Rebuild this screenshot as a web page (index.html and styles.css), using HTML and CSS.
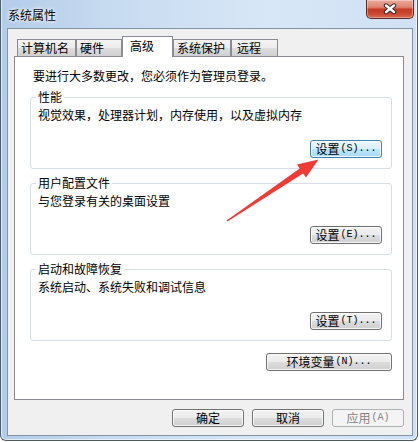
FILE: index.html
```html
<!DOCTYPE html>
<html lang="zh-CN">
<head>
<meta charset="utf-8">
<title>系统属性</title>
<link rel="stylesheet" href="styles.css">
</head>
<body>
<div class="window">
  <div class="titlebar">
    <span class="title">系统属性</span>
    <div class="close">
      <svg width="16" height="12" viewBox="0 0 16 12">
        <path d="M4 2.5 L12 9 M12 2.5 L4 9" stroke="#3a2a28" stroke-width="4.4" stroke-linecap="round" fill="none"/>
        <path d="M4 2.5 L12 9 M12 2.5 L4 9" stroke="#ffffff" stroke-width="2.4" stroke-linecap="round" fill="none"/>
      </svg>
    </div>
  </div>
  <div class="client">
    <div class="tabs">
      <div class="tab tab-name">计算机名</div>
      <div class="tab tab-hw">硬件</div>
      <div class="tab tab-adv tab-selected">高级</div>
      <div class="tab tab-prot">系统保护</div>
      <div class="tab tab-remote">远程</div>
    </div>
    <div class="panel">
      <p class="intro">要进行大多数更改，您必须作为管理员登录。</p>
      <fieldset class="group">
        <legend>性能</legend>
        <div class="desc">视觉效果，处理器计划，内存使用，以及虚拟内存</div>
        <div class="group-actions"><button class="btn btn-hot">设置<span class="acc">(S)...</span></button></div>
      </fieldset>
      <fieldset class="group">
        <legend>用户配置文件</legend>
        <div class="desc">与您登录有关的桌面设置</div>
        <div class="group-actions"><button class="btn">设置<span class="acc">(E)...</span></button></div>
      </fieldset>
      <fieldset class="group">
        <legend>启动和故障恢复</legend>
        <div class="desc">系统启动、系统失败和调试信息</div>
        <div class="group-actions"><button class="btn">设置<span class="acc">(T)...</span></button></div>
      </fieldset>
      <div class="env-row"><button class="btn btn-wide">环境变量<span class="acc">(N)...</span></button></div>
    </div>
    <div class="footer">
      <button class="btn">确定</button>
      <button class="btn">取消</button>
      <button class="btn btn-disabled">应用<span class="acc">(A)</span></button>
    </div>
  </div>
</div>
<svg class="arrow" width="420" height="442" viewBox="0 0 420 442">
  <polygon points="226.5,220.5 299.7,168.6 297,164.6 318.5,159.5 306,177.4 303.1,173.6 227.5,221.5" fill="#ef3b36"/>
</svg>
</body>
</html>
```
FILE: styles.css
```css
* { box-sizing: border-box; }
html, body { margin: 0; padding: 0; }
body {
  width: 420px;
  height: 442px;
  background: #ffffff;
  font-family: "Noto Sans CJK SC", "Liberation Sans", sans-serif;
  font-size: 12px;
  color: #000;
  position: relative;
  overflow: hidden;
}
.window {
  width: 418px;
  height: 441px;
  border: 1px solid #4d5b6a;
  border-top: none;
  border-radius: 0 0 6px 6px;
  background: linear-gradient(to right, #b3cce8 0%, #c6daf0 25%, #d8e7f7 65%, #cfe1f4 100%);
  padding: 0 4px 4px 6px;
  display: flex;
  flex-direction: column;
  box-shadow: inset 1px 0 0 rgba(255,255,255,0.6), inset -1px 0 0 rgba(255,255,255,0.6), inset 0 -1px 0 rgba(255,255,255,0.6);
}
.titlebar {
  height: 28px;
  flex-shrink: 0;
  display: flex;
  justify-content: space-between;
  align-items: flex-start;
  margin-right: -1px;
}
.title {
  padding: 7px 0 0 1px;
  line-height: 16px;
  text-shadow: 0 0 5px #ffffff, 0 0 3px #ffffff;
}
.close {
  width: 48px;
  height: 19px;
  border: 1px solid #5b2a22;
  border-top: none;
  border-radius: 0 0 5px 5px;
  background: linear-gradient(#e9aa9b 0%, #de8470 40%, #c43c26 52%, #c8442c 72%, #d96a51 100%);
  box-shadow: inset 0 0 0 1px rgba(255,255,255,0.35);
  display: flex;
  align-items: center;
  justify-content: center;
}
.client {
  height: 408px;
  flex-shrink: 0;
  border: 1px solid #8393a6;
  background: #f0f0f0;
  padding: 7px 8px 0 6px;
  display: flex;
  flex-direction: column;
}
.tabs {
  display: flex;
  align-items: flex-end;
  height: 20px;
  padding-left: 3px;
  position: relative;
  z-index: 1;
}
.tab {
  height: 17px;
  border: 1px solid #898c95;
  border-bottom: none;
  padding: 0 0 0 3px;
  line-height: 16px;
  white-space: nowrap;
  background: linear-gradient(#f4f4f4 0%, #ececec 50%, #dedede 50%, #d0d0d0 100%);
}
.tab-selected {
  height: 21px;
  margin-bottom: -1px;
  padding: 1px 0 0 7px;
  background: #ffffff;
}
.tab-name { width: 59px; }
.tab-hw { width: 46px; }
.tab-adv { width: 51px; }
.tab-prot { width: 58px; }
.tab-remote { width: 47px; padding-left: 5px; }
.panel {
  height: 344px;
  flex-shrink: 0;
  border: 1px solid #898c95;
  background: #ffffff;
  padding: 11px 11px 0 15px;
  display: flex;
  flex-direction: column;
}
.intro {
  margin: 0 0 6px 3px;
  line-height: 16px;
}
.group {
  margin: 0 0 7px 0;
  border: 1px solid #d5dfe5;
  border-radius: 3px;
  padding: 0 9px 10px 7px;
  min-width: 0;
}
.group legend {
  line-height: 14px;
  padding: 0 2px;
  margin-left: -2px;
}
.desc {
  margin-top: 3px;
  line-height: 16px;
}
.group-actions {
  margin-top: 17px;
  display: flex;
  justify-content: flex-end;
}
.env-row {
  margin-top: 5px;
  display: flex;
  justify-content: flex-end;
}
.btn {
  width: 72px;
  height: 18px;
  padding: 0;
  border: 1px solid #707070;
  border-radius: 3px;
  font-family: "Noto Sans CJK SC", "Liberation Sans", sans-serif;
  font-size: 12px;
  line-height: 16px;
  color: #000;
  background: linear-gradient(#f2f2f2 0%, #ebebeb 50%, #dddddd 50%, #cfcfcf 100%);
  box-shadow: inset 0 0 0 1px rgba(255,255,255,0.8);
  display: flex;
  align-items: center;
  justify-content: center;
  white-space: nowrap;
}
.btn-hot {
  border-color: #3c7fb1;
  background: linear-gradient(#eaf6fd 0%, #d9f0fc 50%, #bee6fd 50%, #a7d9f5 100%);
}
.btn-wide { width: 126px; }
.btn-disabled {
  border-color: #adb2b5;
  background: #f4f4f4;
  color: #838383;
  box-shadow: none;
}
.acc {
  font-family: "Liberation Mono", monospace;
  font-size: 10px;
  margin-left: 1px;
}
.footer {
  display: flex;
  justify-content: flex-end;
  gap: 8px;
  padding-top: 9px;
}
.arrow {
  position: absolute;
  left: 0;
  top: 0;
  pointer-events: none;
}
```
